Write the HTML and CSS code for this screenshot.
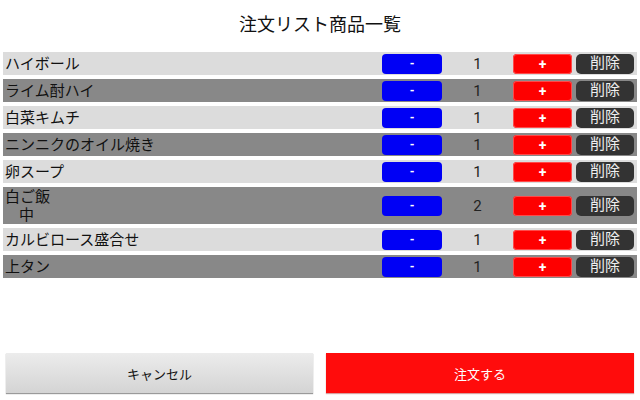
FILE: index.html
```html
<!DOCTYPE html>
<html lang="ja">
<head>
<meta charset="utf-8">
<title>注文リスト商品一覧</title>
<link rel="stylesheet" href="styles.css">
</head>
<body>
<div class="page">
  <h1 class="title">注文リスト商品一覧</h1>
  <div class="list">
    <div class="row light"><div class="name">ハイボール</div><button class="btn minus">-</button><div class="qty">1</div><button class="btn plus">+</button><button class="btn del">削除</button></div>
    <div class="row dark"><div class="name">ライム酎ハイ</div><button class="btn minus">-</button><div class="qty">1</div><button class="btn plus">+</button><button class="btn del">削除</button></div>
    <div class="row light"><div class="name">白菜キムチ</div><button class="btn minus">-</button><div class="qty">1</div><button class="btn plus">+</button><button class="btn del">削除</button></div>
    <div class="row dark"><div class="name">ニンニクのオイル焼き</div><button class="btn minus">-</button><div class="qty">1</div><button class="btn plus">+</button><button class="btn del">削除</button></div>
    <div class="row light"><div class="name">卵スープ</div><button class="btn minus">-</button><div class="qty">1</div><button class="btn plus">+</button><button class="btn del">削除</button></div>
    <div class="row dark"><div class="name">白ご飯<br><span class="sub">中</span></div><button class="btn minus">-</button><div class="qty">2</div><button class="btn plus">+</button><button class="btn del">削除</button></div>
    <div class="row light"><div class="name">カルビロース盛合せ</div><button class="btn minus">-</button><div class="qty">1</div><button class="btn plus">+</button><button class="btn del">削除</button></div>
    <div class="row dark"><div class="name">上タン</div><button class="btn minus">-</button><div class="qty">1</div><button class="btn plus">+</button><button class="btn del">削除</button></div>
  </div>
  <div class="footer">
    <button class="fbtn cancel">キャンセル</button>
    <button class="fbtn order">注文する</button>
  </div>
</div>
</body>
</html>
```
FILE: styles.css
```css
html, body {
  margin: 0;
  padding: 0;
  background: #ffffff;
}
body {
  font-family: Roboto, "Noto Sans CJK JP", sans-serif;
  color: #111;
}
.page {
  height: 400px;
  display: flex;
  flex-direction: column;
}
.title {
  margin: 0;
  height: 52px;
  box-sizing: border-box;
  padding-top: 12px;
  font-size: 18px;
  line-height: 26px;
  font-weight: normal;
  text-align: center;
  color: #111;
}
.list {
  display: flex;
  flex-direction: column;
  gap: 4px;
  padding: 0 3px;
}
.row {
  display: flex;
  align-items: center;
  min-height: 23px;
  padding-right: 3px;
}
.row.light { background: #dcdcdc; }
.row.dark { background: #888888; }
.name {
  flex: 1;
  padding: 0.5px 0 0.5px 2px;
  font-size: 15px;
  line-height: 18px;
  color: #111;
}
.sub { padding-left: 14px; }
.btn {
  border: none;
  margin: 0;
  padding: 0;
  height: 20px;
  display: flex;
  align-items: center;
  justify-content: center;
  line-height: 1;
  font-family: Roboto, "Noto Sans CJK JP", sans-serif;
  color: #fff;
  border-radius: 4px;
}
.minus {
  width: 60px;
  background: #0000f5;
  font-size: 12px;
  font-weight: bold;
}
.plus {
  width: 59px;
  background: #fe0000;
  box-shadow: inset 0 0 0 1px #ff4a4a;
  font-size: 14px;
  font-weight: bold;
}
.del {
  width: 58px;
  margin-left: 4px;
  background: #333333;
  color: #eeeeee;
  font-size: 15px;
  border-radius: 5px;
  padding-bottom: 1px;
}
.qty {
  width: 71px;
  text-align: center;
  font-size: 15px;
  color: #222;
}
.footer {
  margin-top: auto;
  display: grid;
  grid-template-columns: 307px 308px;
  gap: 13px;
  padding: 0 6px 7px 6px;
}
.fbtn {
  height: 40px;
  border: none;
  margin: 0;
  font-family: Roboto, "Noto Sans CJK JP", sans-serif;
  font-size: 13px;
}
.cancel {
  background: linear-gradient(#ececec, #d4d4d4);
  color: #111;
  box-shadow: 0 1px 1px #9a9a9a;
}
.order {
  background: #ff0c0c;
  color: #fff;
  box-shadow: 0 1px 1px #d8a0a0;
}
```
